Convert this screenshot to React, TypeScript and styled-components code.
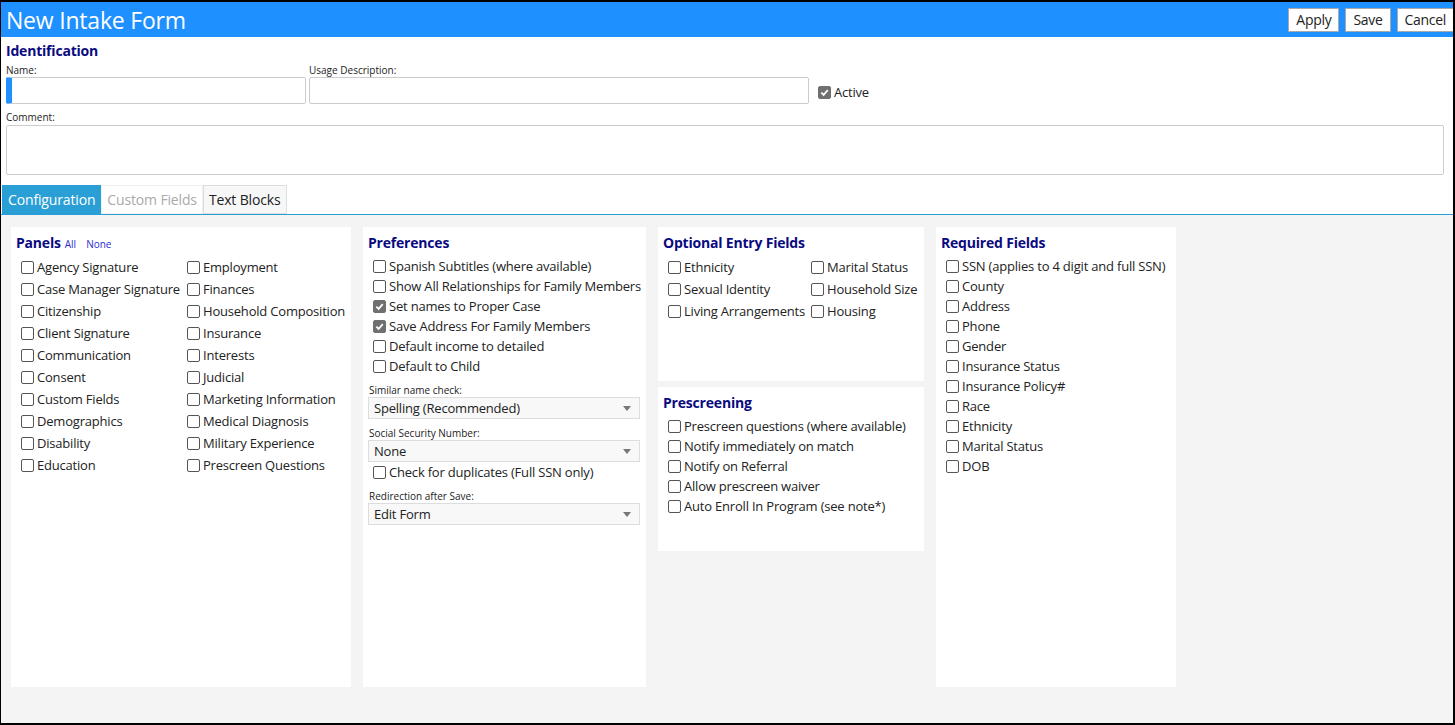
import React from "react";
import styled, { createGlobalStyle } from "styled-components";

const Global = createGlobalStyle`
  html, body { margin: 0; padding: 0; }
  body { font-family: "Open Sans", "Noto Sans", sans-serif; color: #222; }
  * { box-sizing: border-box; }
`;

const Frame = styled.div`
  width: 1455px;
  height: 725px;
  border-style: solid;
  border-color: #000;
  border-width: 2px 2px 2px 1px;
  display: flex;
  flex-direction: column;
  overflow: hidden;
  background: #fff;
`;

const Header = styled.div`
  height: 35px;
  background: #1e90ff;
  display: flex;
  align-items: center;
  justify-content: space-between;
  padding-left: 5px;
  flex-shrink: 0;
`;

const Title = styled.h1`
  margin: 0;
  font-size: 23px;
  font-weight: 400;
  color: #fff;
  letter-spacing: -0.2px;
`;

const Actions = styled.div`
  display: flex;
  gap: 6px;
  margin-right: -1px;
`;

const HeaderButton = styled.button`
  height: 24px;
  padding: 0 7px;
  background: #fff;
  border: 1px solid #a8a8a8;
  font-family: inherit;
  font-size: 14px;
  letter-spacing: -0.3px;
  color: #222;
`;

const Ident = styled.section`
  padding: 5px 9px 0 5px;
  flex-shrink: 0;
`;

const Heading = styled.h2`
  margin: 0;
  font-size: 14px;
  line-height: 18px;
  font-weight: 700;
  color: #0a0a80;
  letter-spacing: -0.2px;
`;

const FieldLabel = styled.label<{ $gap?: number }>`
  display: block;
  font-size: 10px;
  line-height: 14px;
  margin-top: ${(p) => p.$gap ?? 3}px;
  color: #222;
`;

const FieldRow = styled.div`
  display: flex;
  align-items: flex-end;
  gap: 3px;
`;

const Field = styled.div<{ $w: number }>`
  width: ${(p) => p.$w}px;
`;

const TextInput = styled.div<{ $focus?: boolean }>`
  height: 27px;
  border: 1px solid #ccc;
  border-radius: 2px;
  background: #fff;
  ${(p) => (p.$focus ? "border-left: 6px solid #1e90ff;" : "")}
`;

const ActiveWrap = styled.div`
  margin-left: 6px;
  padding-bottom: 3px;
  display: flex;
  align-items: center;
  gap: 3px;
  font-size: 13px;
  letter-spacing: -0.2px;
`;

const CommentBox = styled.div`
  height: 50px;
  border: 1px solid #ccc;
  border-radius: 2px;
  margin-top: 1px;
`;

const Tabs = styled.div`
  margin-top: 10px;
  display: flex;
  padding-left: 1px;
  border-bottom: 1px solid #2a9fd6;
  flex-shrink: 0;
`;

const Tab = styled.div<{ $state: "active" | "disabled" | "normal" }>`
  height: 29px;
  display: flex;
  align-items: center;
  padding: 0 5px;
  font-size: 14px;
  letter-spacing: -0.15px;
  ${(p) =>
    p.$state === "active"
      ? "background: #2a9fd6; color: #fff; border: 1px solid #2a9fd6;"
      : p.$state === "disabled"
      ? "background: #fff; color: #aaa; border: 1px solid #f0f0f0;"
      : "background: #f7f7f7; color: #222; border: 1px solid #ddd;"}
`;

const Content = styled.div`
  flex: 1;
  background: #f4f4f4;
  padding: 12px 10px;
  display: flex;
  gap: 12px;
  align-items: flex-start;
`;

const Column = styled.div`
  display: flex;
  flex-direction: column;
  gap: 6px;
`;

const Card = styled.div<{ $w: number; $h: number }>`
  width: ${(p) => p.$w}px;
  height: ${(p) => p.$h}px;
  background: #fff;
  padding: 7px 5px 0 5px;
`;

const CardHeading = styled.div`
  display: flex;
  align-items: baseline;
  gap: 4px;
  margin-bottom: 4px;
`;

const SmallLink = styled.a`
  font-size: 10px;
  color: #2b2bd0;
  margin-right: 6px;
`;

const Grid = styled.div<{ $cols: string }>`
  display: grid;
  grid-template-columns: ${(p) => p.$cols};
  padding-left: 5px;
`;

const List = styled.div`
  display: flex;
  flex-direction: column;
  padding-left: 5px;
`;

const Row = styled.div<{ $h: number }>`
  height: ${(p) => p.$h}px;
  display: flex;
  align-items: center;
  gap: 3px;
  font-size: 13px;
  letter-spacing: -0.2px;
  white-space: nowrap;
  color: #222;
`;

const Box = styled.span<{ $checked?: boolean }>`
  width: 13px;
  height: 13px;
  flex-shrink: 0;
  border-radius: 2px;
  border: 1px solid ${(p) => (p.$checked ? "#707070" : "#555")};
  background: ${(p) => (p.$checked ? "#707070" : "#fff")};
  display: inline-flex;
  align-items: center;
  justify-content: center;
`;

const SelectLabel = styled.div`
  font-size: 10px;
  line-height: 14px;
  margin-top: 7px;
  padding-left: 1px;
`;

const Select = styled.div`
  height: 22px;
  width: 272px;
  border: 1px solid #ddd;
  background: #f8f8f8;
  display: flex;
  align-items: center;
  justify-content: space-between;
  padding: 0 8px 0 5px;
  font-size: 13px;
  letter-spacing: -0.2px;
`;

const Arrow = styled.span`
  width: 0;
  height: 0;
  border-left: 4px solid transparent;
  border-right: 4px solid transparent;
  border-top: 5px solid #777;
`;

const Check = ({ checked }: { checked?: boolean }) => (
  <Box $checked={checked}>
    {checked && (
      <svg width="9" height="9" viewBox="0 0 10 10">
        <path d="M1.5 5.2 L4 7.6 L8.6 2.4" fill="none" stroke="#fff" strokeWidth="2" />
      </svg>
    )}
  </Box>
);

const Item = ({ label, checked, h = 20 }: { label: string; checked?: boolean; h?: number }) => (
  <Row $h={h}>
    <Check checked={checked} />
    <span>{label}</span>
  </Row>
);

const panelsLeft = [
  "Agency Signature",
  "Case Manager Signature",
  "Citizenship",
  "Client Signature",
  "Communication",
  "Consent",
  "Custom Fields",
  "Demographics",
  "Disability",
  "Education",
];
const panelsRight = [
  "Employment",
  "Finances",
  "Household Composition",
  "Insurance",
  "Interests",
  "Judicial",
  "Marketing Information",
  "Medical Diagnosis",
  "Military Experience",
  "Prescreen Questions",
];
const panels = panelsLeft.flatMap((l, i) => [l, panelsRight[i]]);

const optional = ["Ethnicity", "Marital Status", "Sexual Identity", "Household Size", "Living Arrangements", "Housing"];

const prescreen = [
  "Prescreen questions (where available)",
  "Notify immediately on match",
  "Notify on Referral",
  "Allow prescreen waiver",
  "Auto Enroll In Program (see note*)",
];

const required = [
  "SSN (applies to 4 digit and full SSN)",
  "County",
  "Address",
  "Phone",
  "Gender",
  "Insurance Status",
  "Insurance Policy#",
  "Race",
  "Ethnicity",
  "Marital Status",
  "DOB",
];

export default function App() {
  return (
    <>
      <Global />
      <Frame>
        <Header>
          <Title>New Intake Form</Title>
          <Actions>
            <HeaderButton>Apply</HeaderButton>
            <HeaderButton>Save</HeaderButton>
            <HeaderButton>Cancel</HeaderButton>
          </Actions>
        </Header>
        <Ident>
          <Heading>Identification</Heading>
          <FieldRow>
            <Field $w={300}>
              <FieldLabel>Name:</FieldLabel>
              <TextInput $focus />
            </Field>
            <Field $w={500}>
              <FieldLabel>Usage Description:</FieldLabel>
              <TextInput />
            </Field>
            <ActiveWrap>
              <Check checked />
              <span>Active</span>
            </ActiveWrap>
          </FieldRow>
          <FieldLabel $gap={6}>Comment:</FieldLabel>
          <CommentBox />
        </Ident>
        <Tabs>
          <Tab $state="active">Configuration</Tab>
          <Tab $state="disabled">Custom Fields</Tab>
          <Tab $state="normal">Text Blocks</Tab>
        </Tabs>
        <Content>
          <Card $w={340} $h={460}>
            <CardHeading>
              <Heading>Panels</Heading>
              <SmallLink>All</SmallLink>
              <SmallLink>None</SmallLink>
            </CardHeading>
            <Grid $cols="166px 1fr">
              {panels.map((p, i) => (
                <Item key={i} label={p} h={22} />
              ))}
            </Grid>
          </Card>
          <Card $w={283} $h={460}>
            <CardHeading>
              <Heading>Preferences</Heading>
            </CardHeading>
            <List>
              <Item label="Spanish Subtitles (where available)" />
              <Item label="Show All Relationships for Family Members" />
              <Item label="Set names to Proper Case" checked />
              <Item label="Save Address For Family Members" checked />
              <Item label="Default income to detailed" />
              <Item label="Default to Child" />
            </List>
            <SelectLabel>Similar name check:</SelectLabel>
            <Select>
              <span>Spelling (Recommended)</span>
              <Arrow />
            </Select>
            <SelectLabel>Social Security Number:</SelectLabel>
            <Select>
              <span>None</span>
              <Arrow />
            </Select>
            <List>
              <Item label="Check for duplicates (Full SSN only)" />
            </List>
            <SelectLabel>Redirection after Save:</SelectLabel>
            <Select>
              <span>Edit Form</span>
              <Arrow />
            </Select>
          </Card>
          <Column>
            <Card $w={266} $h={154}>
              <CardHeading>
                <Heading>Optional Entry Fields</Heading>
              </CardHeading>
              <Grid $cols="143px 1fr">
                {optional.map((p, i) => (
                  <Item key={i} label={p} h={22} />
                ))}
              </Grid>
            </Card>
            <Card $w={266} $h={164}>
              <CardHeading>
                <Heading>Prescreening</Heading>
              </CardHeading>
              <List>
                {prescreen.map((p, i) => (
                  <Item key={i} label={p} />
                ))}
              </List>
            </Card>
          </Column>
          <Card $w={240} $h={460}>
            <CardHeading>
              <Heading>Required Fields</Heading>
            </CardHeading>
            <List>
              {required.map((p, i) => (
                <Item key={i} label={p} />
              ))}
            </List>
          </Card>
        </Content>
      </Frame>
    </>
  );
}
